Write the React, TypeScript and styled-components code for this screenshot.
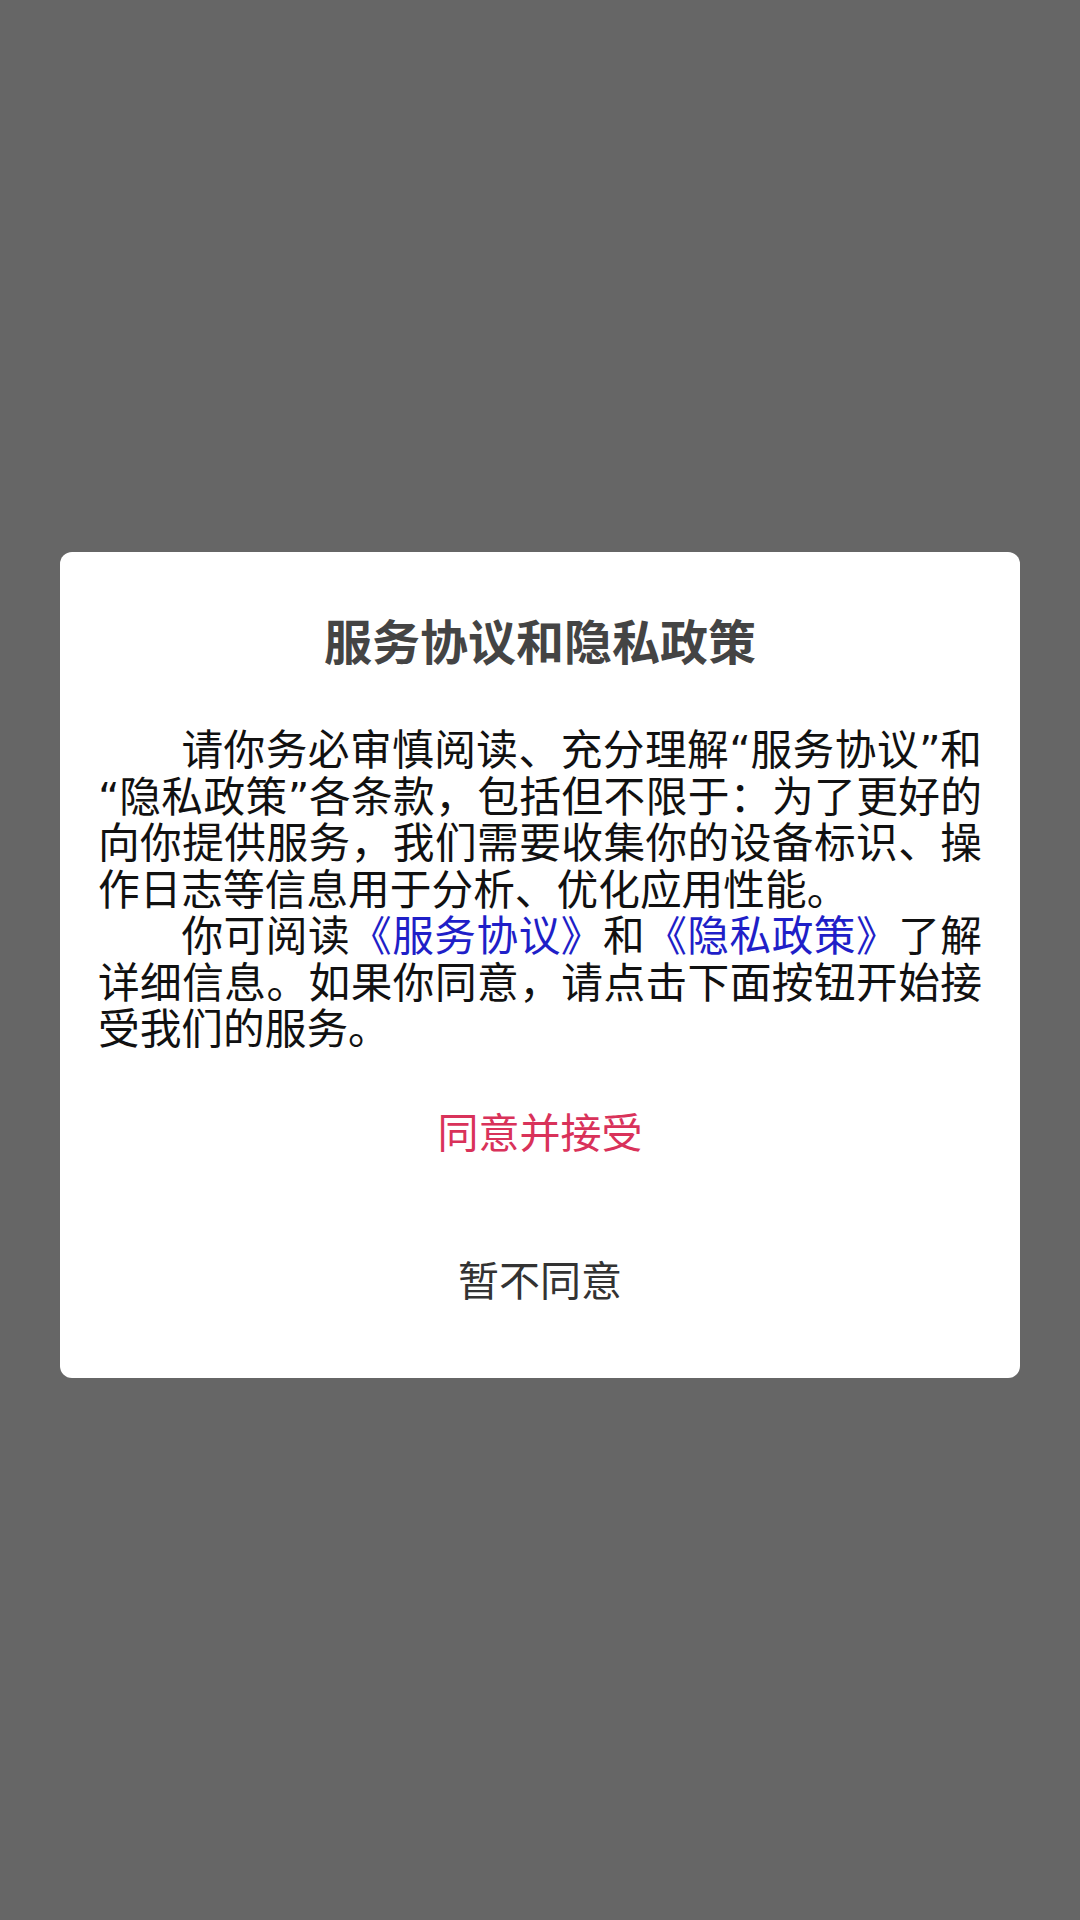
import React from "react";
import styled, { createGlobalStyle } from "styled-components";

const GlobalStyle = createGlobalStyle`
  html, body {
    margin: 0;
    padding: 0;
    background: #666666;
  }
  body {
    font-family: "Noto Sans CJK SC", "Noto Sans", sans-serif;
  }
`;

const Overlay = styled.div`
  box-sizing: border-box;
  width: 1080px;
  height: 1920px;
  padding-top: 10px;
  background: #666666;
  display: flex;
  align-items: center;
  justify-content: center;
`;

const Dialog = styled.div`
  box-sizing: border-box;
  width: 960px;
  height: 826px;
  background: #ffffff;
  border-radius: 12px;
  display: flex;
  flex-direction: column;
  padding: 56px 38px 21px 38px;
`;

const Title = styled.h1`
  margin: 0;
  font-size: 48px;
  line-height: 62px;
  font-weight: 700;
  color: #444444;
  text-align: center;
`;

const Body = styled.div`
  margin-top: 54px;
  font-size: 41.7px;
  line-height: 46.5px;
  color: #111111;
  text-align: justify;
`;

const Para = styled.p`
  margin: 0;
  text-indent: 2em;
`;

/* half-width curly quotes, as the system font draws them */
const Quote = styled.span<{ $close?: boolean }>`
  display: inline-block;
  width: 0.5em;
  line-height: 0;
  text-indent: 0;
  text-align: ${(p) => (p.$close ? "right" : "left")};
  font-family: "DejaVu Sans", sans-serif;
`;

const Link = styled.span`
  color: #1f1fc8;
`;

const Actions = styled.div`
  margin-top: 6px;
  display: flex;
  flex-direction: column;
`;

const ActionButton = styled.button<{ $primary?: boolean }>`
  height: 148px;
  border: none;
  background: transparent;
  padding: 0;
  font-family: "Noto Sans CJK SC", "Noto Sans", sans-serif;
  font-size: 41px;
  color: ${(p) => (p.$primary ? "#d9325a" : "#333333")};
  cursor: pointer;
`;

export default function App() {
  return (
    <>
      <GlobalStyle />
      <Overlay>
        <Dialog>
          <Title>服务协议和隐私政策</Title>
          <Body>
            <Para>
              请你务必审慎阅读、充分理解<Quote>“</Quote>服务协议<Quote $close>”</Quote>和<Quote>“</Quote>隐私政策<Quote $close>”</Quote>各条款，包括但不限于：为了更好的向你提供服务，我们需要收集你的设备标识、操作日志等信息用于分析、优化应用性能。
            </Para>
            <Para>
              你可阅读<Link>《服务协议》</Link>和<Link>《隐私政策》</Link>了解详细信息。如果你同意，请点击下面按钮开始接受我们的服务。
            </Para>
          </Body>
          <Actions>
            <ActionButton $primary>同意并接受</ActionButton>
            <ActionButton>暂不同意</ActionButton>
          </Actions>
        </Dialog>
      </Overlay>
    </>
  );
}
